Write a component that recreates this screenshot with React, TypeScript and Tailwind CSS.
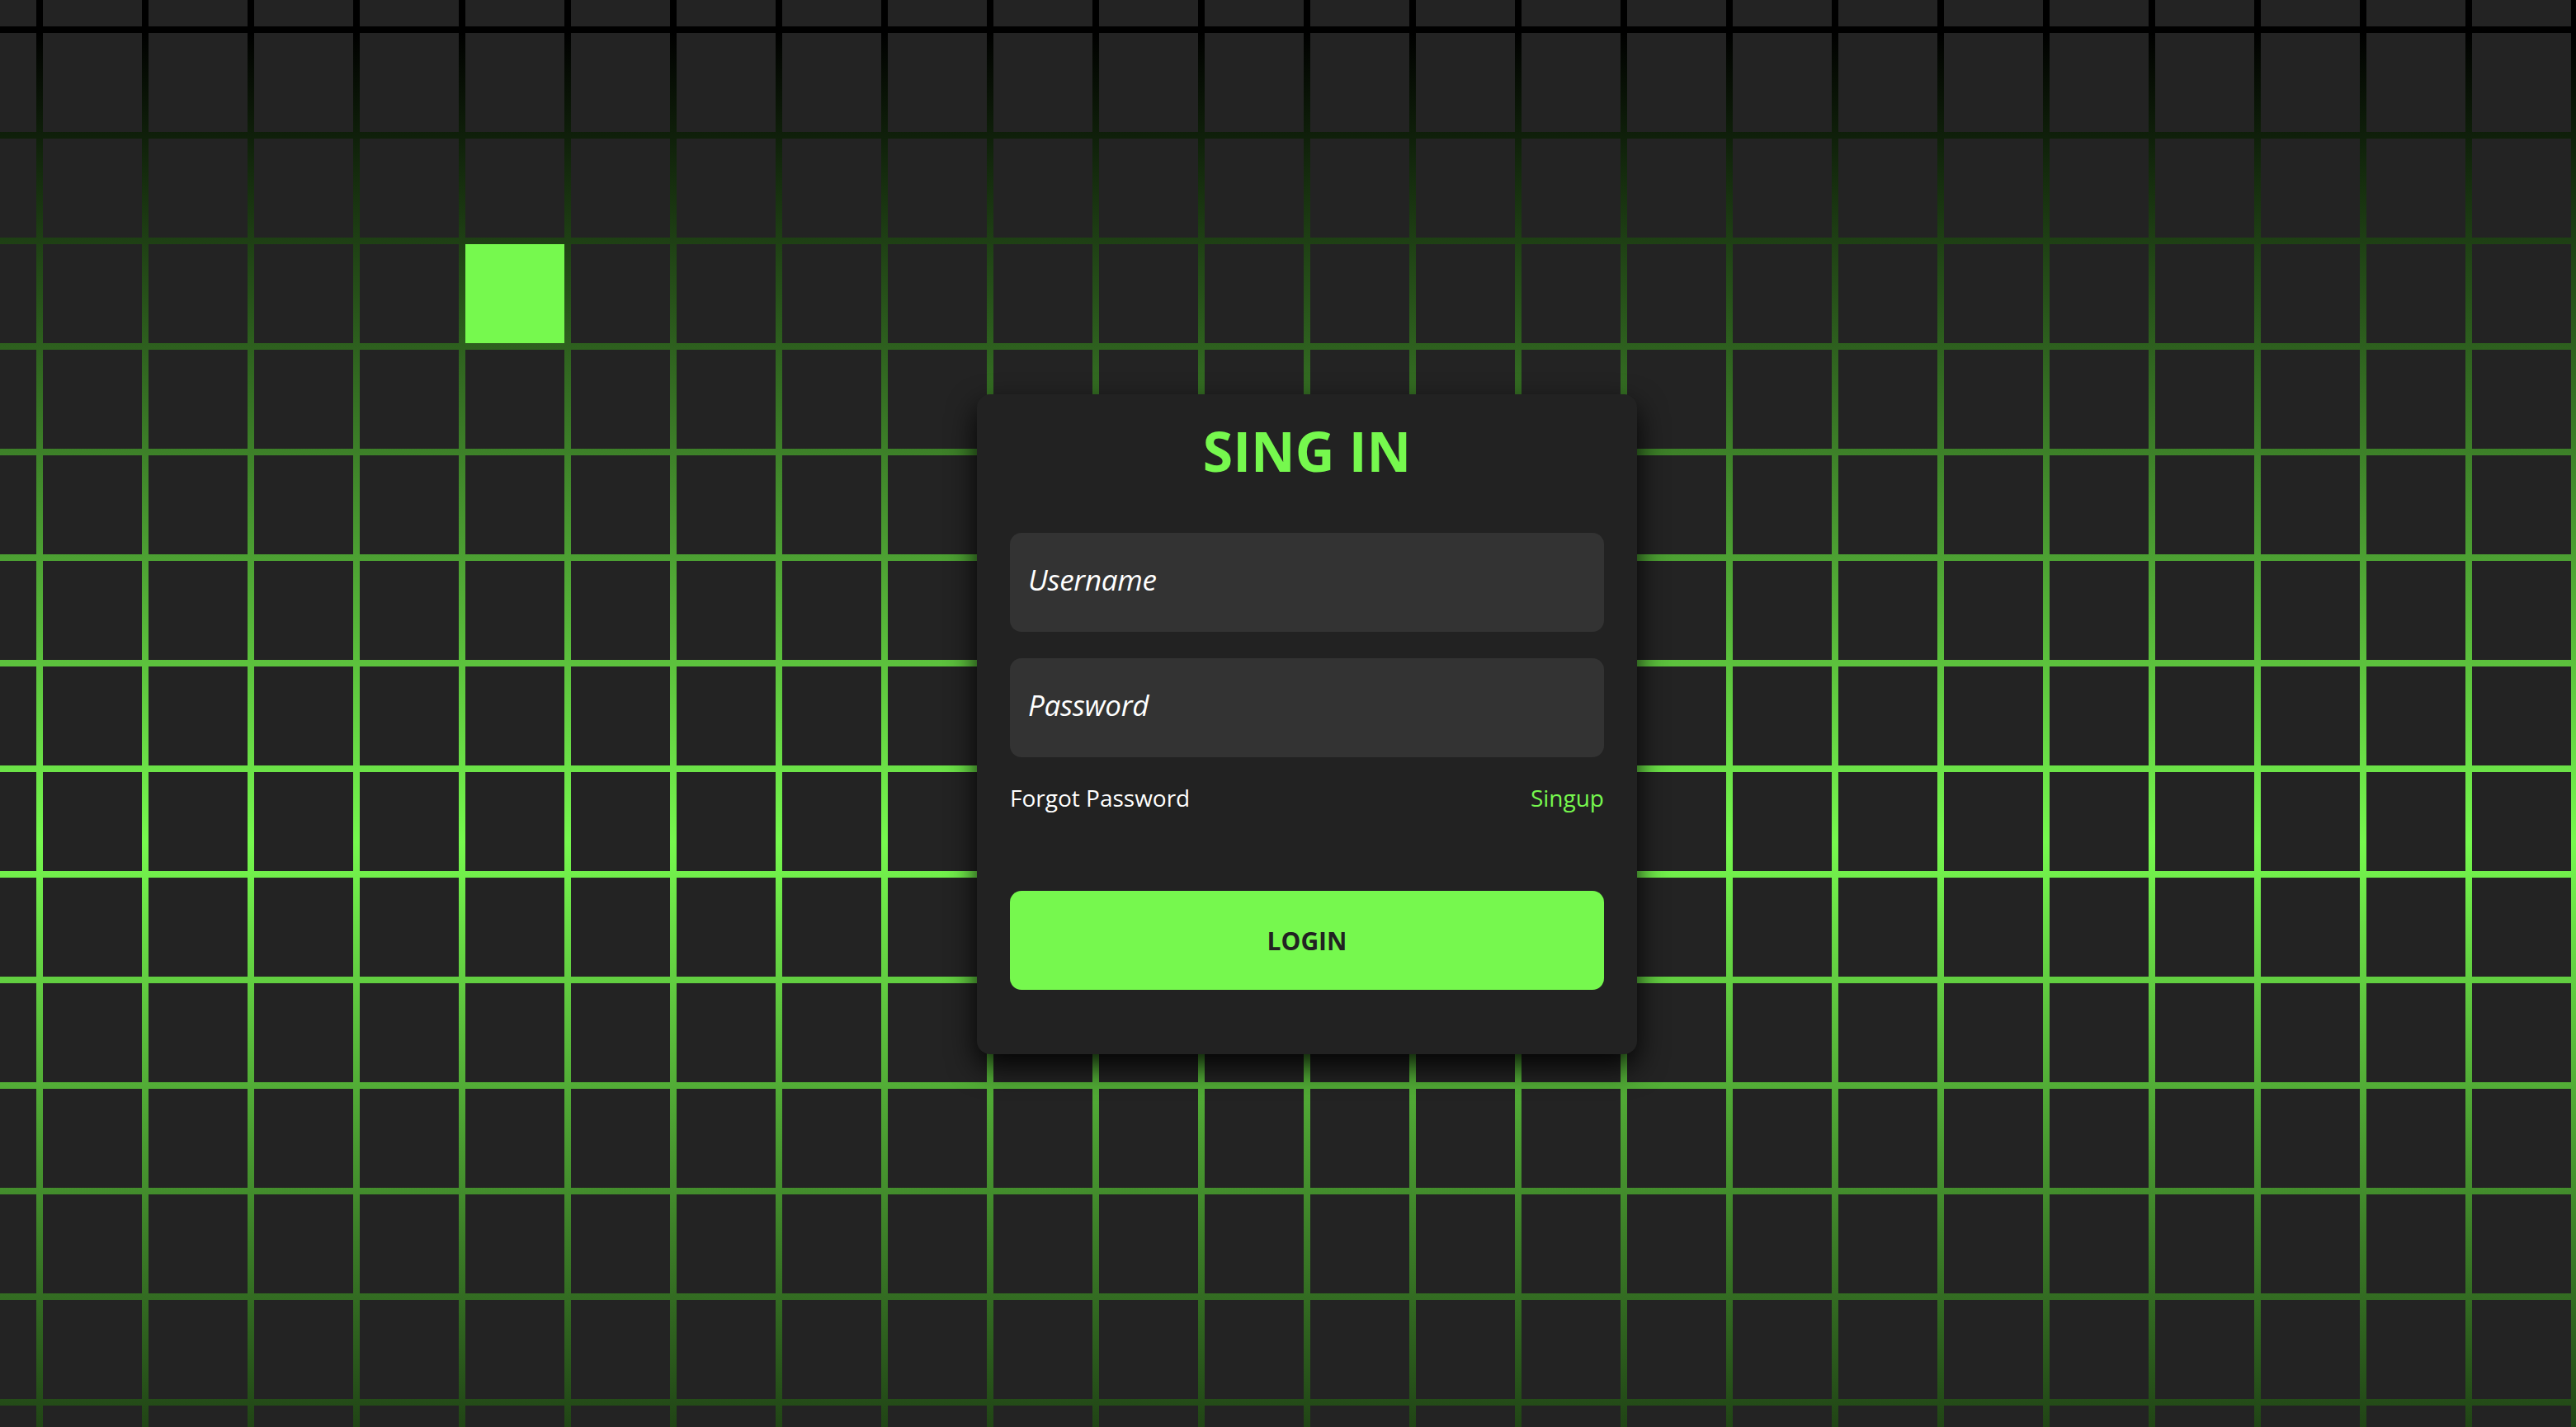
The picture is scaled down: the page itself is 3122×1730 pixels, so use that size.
import React from "react";

const COLS = 26;
const ROWS = 15;
const LIT = { r: 2, c: 4 };

export default function App() {
  const cells: React.ReactNode[] = [];
  for (let r = 0; r < ROWS; r++) {
    for (let c = 0; c < COLS; c++) {
      const lit = r === LIT.r + 1 && c === LIT.c + 1;
      cells.push(
        <span
          key={`${r}-${c}`}
          className={lit ? "block w-[120px] h-[120px] bg-[#76f94e]" : "block w-[120px] h-[120px] bg-[#232323]"}
        />
      );
    }
  }
  return (
    <div className="relative w-full h-screen overflow-hidden bg-black font-['Open_Sans',sans-serif]">
      <div className="absolute inset-0 overflow-hidden bg-[linear-gradient(180deg,#000_0px,#000_40px,#76f84e_1020px,#000_2000px)]">
        <div className="grid grid-cols-[repeat(26,120px)] gap-2 -ml-[76px] -mt-[88px] w-max">{cells}</div>
      </div>

      <div className="absolute left-[1184px] top-[478px] w-[800px] h-[800px] rounded-2xl bg-[#222222] shadow-[0_15px_35px_rgba(0,0,0,0.9)] px-10 pt-[28px] flex flex-col">
        <h2 className="text-center text-[66px] leading-[80px] font-bold text-[#76f84e] uppercase">Sing In</h2>
        <input
          className="mt-[60px] h-[120px] w-full rounded-[14px] bg-[#333333] pl-[22px] pb-2 text-[35px] tracking-[-0.3px] italic text-white placeholder:text-white outline-none"
          placeholder="Username"
        />
        <input
          className="mt-[32px] h-[120px] w-full rounded-[14px] bg-[#333333] pl-[22px] pb-2 text-[35px] tracking-[-0.3px] italic text-white placeholder:text-white outline-none"
          placeholder="Password"
          type="password"
        />
        <div className="mt-[29px] flex justify-between text-[28px] leading-[40px]">
          <span className="text-white">Forgot Password</span>
          <span className="text-[#76f84e]">Singup</span>
        </div>
        <button className="mt-[93px] h-[120px] w-full rounded-[14px] bg-[#76f84e] text-[30px] font-bold text-[#222222] uppercase">
          Login
        </button>
      </div>
    </div>
  );
}
